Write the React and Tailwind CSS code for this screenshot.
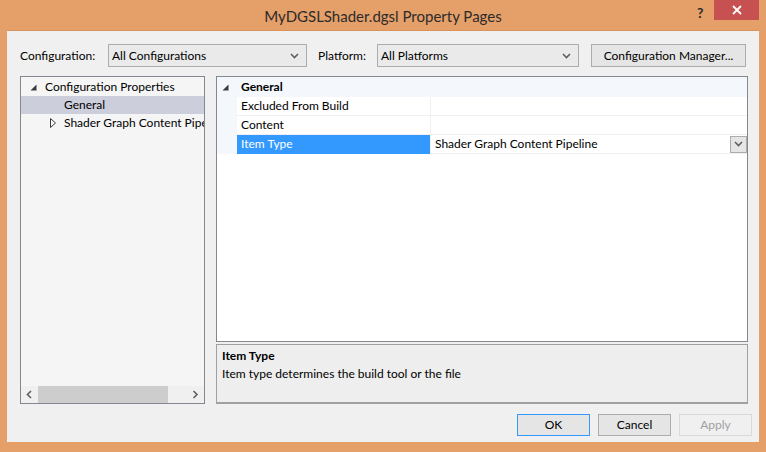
import React from "react";

function Chevron({ dir = "down", color = "#606060" }) {
  const d =
    dir === "down"
      ? "M1 1 L4.5 4.5 L8 1"
      : dir === "left"
      ? "M5 1 L1.5 4.5 L5 8"
      : "M1.5 1 L5 4.5 L1.5 8";
  const w = dir === "down" ? 9 : 7;
  const h = dir === "down" ? 6 : 9;
  return (
    <svg width={w} height={h} viewBox={`0 0 ${w} ${h}`}>
      <path d={d} fill="none" stroke={color} strokeWidth="1.6" />
    </svg>
  );
}

function Expanded() {
  return (
    <svg width="7" height="7" viewBox="0 0 7 7">
      <path d="M6.5 0.5 L6.5 6.5 L0.5 6.5 Z" fill="#3c3c3c" />
    </svg>
  );
}

function Collapsed() {
  return (
    <svg width="6" height="10" viewBox="0 0 6 10">
      <path d="M0.5 0.5 L5.5 5 L0.5 9.5 Z" fill="none" stroke="#3c3c3c" strokeWidth="1" />
    </svg>
  );
}

function Combo({ width, text }) {
  return (
    <div
      className={`${width} h-[23px] border border-[#ACACAC] bg-[#EAEAEA] flex items-center pl-[3px] pr-[7px]`}
    >
      <span className="flex-1">{text}</span>
      <Chevron />
    </div>
  );
}

const rows = [
  { name: "Excluded From Build", value: "" },
  { name: "Content", value: "" },
  { name: "Item Type", value: "Shader Graph Content Pipeline", selected: true },
];

export default function App() {
  return (
    <div className="w-[766px] h-[452px] bg-[#E59F69] flex flex-col font-[Lato,sans-serif] text-[12px] text-black">
      {/* title bar */}
      <div className="h-[30px] flex">
        <div className="w-[76px]" />
        <div className="flex-1 text-center text-[15px] text-[#2b2b2b] pt-[5px]">
          MyDGSLShader.dgsl Property Pages
        </div>
        <div className="w-[76px] flex items-start">
          <span className="text-[14px] font-bold text-[#2b2b2b] mt-[2px] ml-[7px] w-[17px]">?</span>
          <div className="w-[45px] h-[20px] bg-[#C75050] flex items-center justify-center">
            <svg width="10" height="10" viewBox="0 0 10 10">
              <path d="M1 1 L9 9 M9 1 L1 9" stroke="#fff" strokeWidth="1.8" />
            </svg>
          </div>
        </div>
      </div>

      {/* client area */}
      <div className="mx-[7px] h-[412px] bg-[#F0F0F0] border-t border-[#D9935D] flex flex-col">
        <div className="mt-[13px] ml-[13px] flex items-center h-[23px]">
          <span className="w-[88px]">Configuration:</span>
          <Combo width="w-[199px]" text="All Configurations" />
          <span className="ml-[11px] w-[59px]">Platform:</span>
          <Combo width="w-[202px]" text="All Platforms" />
          <div className="ml-[12px] w-[155px] h-[23px] border border-[#ACACAC] bg-[#E5E5E5] flex items-center justify-center">
            Configuration Manager...
          </div>
        </div>

        <div className="mt-[9px] ml-[13px] flex h-[328px]">
          {/* tree */}
          <div className="w-[185px] border border-[#828790] bg-[#F5F5F5] flex flex-col">
            <div className="pt-[1px]">
              <div className="h-[18px] flex items-center">
                <span className="w-[24px] shrink-0 pl-[9px] flex"><Expanded /></span>
                <span>Configuration Properties</span>
              </div>
              <div className="h-[18px] flex items-center bg-[#CCCEDB] pl-[43px]">General</div>
              <div className="h-[18px] flex items-center whitespace-nowrap overflow-hidden">
                <span className="w-[43px] shrink-0 pl-[29px] flex"><Collapsed /></span>
                <span>Shader Graph Content Pipeline</span>
              </div>
            </div>
            <div className="mt-auto h-[17px] flex items-center bg-[#F0F0F0]">
              <div className="w-[17px] flex justify-center"><Chevron dir="left" /></div>
              <div className="w-[130px] h-[17px] bg-[#CDCDCD]" />
              <div className="flex-1" />
              <div className="w-[17px] flex justify-center"><Chevron dir="right" /></div>
            </div>
          </div>

          {/* property grid */}
          <div className="ml-[11px] w-[532px] flex flex-col">
            <div className="h-[266px] border border-[#828790] bg-white flex flex-col">
              <div className="h-[20px] flex items-center bg-[#F4F7FC]">
                <span className="w-[24px] pl-[5px] flex"><Expanded /></span>
                <span className="font-bold">General</span>
              </div>
              {rows.map((r) => (
                <div key={r.name} className="h-[19px] flex">
                  <div className="w-[20px] bg-[#F4F7FC]" />
                  <div
                    className={`w-[193px] flex items-center pl-[4px] border-b ${
                      r.selected ? "bg-[#3399FF] text-white border-[#3399FF]" : "border-[#F0F0F0]"
                    }`}
                  >
                    {r.name}
                  </div>
                  <div className="flex-1 flex items-center pl-[4px] border-b border-l border-[#F0F0F0]">
                    <span className="flex-1">{r.value}</span>
                    {r.selected && (
                      <div className="w-[17px] h-[17px] border border-[#ACACAC] bg-[#E5E5E5] flex items-center justify-center">
                        <Chevron />
                      </div>
                    )}
                  </div>
                </div>
              ))}
            </div>
            <div className="mt-[2px] h-[60px] border border-b-2 border-[#A0A0A0] bg-[#EEEEEE] px-[5px] pt-[2px]">
              <div className="font-bold leading-[18px]">Item Type</div>
              <div className="leading-[18px]">Item type determines the build tool or the file</div>
            </div>
          </div>
        </div>

        <div className="mt-[10px] flex justify-end gap-[8px] pr-[7px]">
          <div className="w-[73px] h-[22px] border border-[#3399FF] bg-[#E5E5E5] flex items-center justify-center">OK</div>
          <div className="w-[73px] h-[22px] border border-[#ACACAC] bg-[#E5E5E5] flex items-center justify-center">Cancel</div>
          <div className="w-[73px] h-[22px] border border-[#D9D9D9] bg-[#F0F0F0] text-[#A0A0A0] flex items-center justify-center">Apply</div>
        </div>
      </div>
    </div>
  );
}
